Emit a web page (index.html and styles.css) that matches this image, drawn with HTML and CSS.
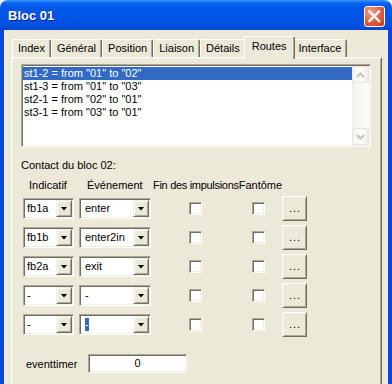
FILE: index.html
```html
<!DOCTYPE html>
<html>
<head>
    <meta charset="UTF-8">
    <title>Bloc 01</title>
    <link rel="stylesheet" href="styles.css">
</head>
<body>
    <div class="window">
        <div class="titlebar">
            <span class="title">Bloc 01</span>
            <span class="close">
                <svg width="19" height="19" viewBox="0 0 19 19"><path d="M4.5 4.5L14 14M14 4.5L4.5 14" stroke="#fff" stroke-width="2.4" stroke-linecap="square"/></svg>
            </span>
        </div>
        <div class="client">
            <ul class="tabs">
                <li class="tab">Index</li>
                <li class="tab">Général</li>
                <li class="tab">Position</li>
                <li class="tab">Liaison</li>
                <li class="tab">Détails</li>
                <li class="tab active">Routes</li>
                <li class="tab">Interface</li>
            </ul>
            <div class="page">
                <div class="listbox">
                    <ul class="items">
                        <li class="item selected">st1-2 = from "01" to "02"</li>
                        <li class="item">st1-3 = from "01" to "03"</li>
                        <li class="item">st2-1 = from "02" to "01"</li>
                        <li class="item">st3-1 = from "03" to "01"</li>
                    </ul>
                    <div class="vscroll">
                        <span class="sb-btn"><svg width="9" height="6" viewBox="0 0 9 6"><path d="M1 5L4.5 1.5L8 5" fill="none" stroke="#c6c4b8" stroke-width="2"/></svg></span>
                        <span class="sb-btn"><svg width="9" height="6" viewBox="0 0 9 6"><path d="M1 1L4.5 4.5L8 1" fill="none" stroke="#c6c4b8" stroke-width="2"/></svg></span>
                    </div>
                </div>

                <p class="caption">Contact du bloc 02:</p>
                <div class="heads">
                    <span class="h-ind">Indicatif</span>
                    <span class="h-evt">Événement</span>
                    <span class="h-fin">Fin des impulsions</span>
                    <span>Fantôme</span>
                </div>

                <div class="rows">
                    <div class="combo short"><span class="value">fb1a</span><span class="drop"></span></div>
                    <div class="combo long"><span class="value">enter</span><span class="drop"></span></div>
                    <span class="check"></span>
                    <span class="check"></span>
                    <button class="more">...</button>

                    <div class="combo short"><span class="value">fb1b</span><span class="drop"></span></div>
                    <div class="combo long"><span class="value">enter2in</span><span class="drop"></span></div>
                    <span class="check"></span>
                    <span class="check"></span>
                    <button class="more">...</button>

                    <div class="combo short"><span class="value">fb2a</span><span class="drop"></span></div>
                    <div class="combo long"><span class="value">exit</span><span class="drop"></span></div>
                    <span class="check"></span>
                    <span class="check"></span>
                    <button class="more">...</button>

                    <div class="combo short"><span class="value">-</span><span class="drop"></span></div>
                    <div class="combo long"><span class="value">-</span><span class="drop"></span></div>
                    <span class="check"></span>
                    <span class="check"></span>
                    <button class="more">...</button>

                    <div class="combo short"><span class="value">-</span><span class="drop"></span></div>
                    <div class="combo long"><span class="value"><span class="sel">-</span></span><span class="drop"></span></div>
                    <span class="check"></span>
                    <span class="check"></span>
                    <button class="more">...</button>
                </div>

                <div class="timer">
                    <span class="timer-label">eventtimer</span>
                    <span class="field">0</span>
                </div>
            </div>
        </div>
    </div>
</body>
</html>
```

FILE: styles.css
```css
html, body, ul, li, p{margin: 0;padding: 0;}
body{background: #eef0f2;font: 11px "Liberation Sans", Arial, sans-serif;color: #000;}

.window{width: 392px;height: 384px;overflow: hidden;display: flex;flex-direction: column;}

/* title bar */
.titlebar{height: 30px;flex: none;display: flex;justify-content: space-between;align-items: flex-start;padding: 0 7px 0 8px;border-radius: 8px 8px 0 0;
    background: linear-gradient(#3d95ff 0, #0a66f2 3px, #0058e8 7px, #0055e5 55%, #0052e0 85%, #0845c9 100%);}
.title{margin-top: 8px;font-size: 13px;font-weight: bold;color: #fff;text-shadow: 1px 1px #0a1c8a;}
.close{margin-top: 6px;width: 21px;height: 21px;box-sizing: border-box;border: 1px solid #fff;border-radius: 3px;display: flex;align-items: center;justify-content: center;
    background: radial-gradient(circle at 30% 25%, #f2a08a, #e35a3b 55%, #c73a1c);}

/* window body */
.client{flex: 1;background: #ece9d8;border-left: 4px solid #0846dc;border-right: 4px solid #0846dc;}

.tabs{display: flex;align-items: flex-end;height: 21px;margin: 6px 0 0 8px;list-style: none;}
.tab{height: 18px;box-sizing: border-box;padding: 0 5px;line-height: 17px;white-space: nowrap;
    border: 1px solid;border-bottom: 0;border-color: #fff #716f64 transparent #fff;border-radius: 2px 2px 0 0;box-shadow: inset -1px 0 #aca899;}
.tab.active{height: 23px;margin: 0 -2px -2px;padding: 0 7px 3px;line-height: 19px;position: relative;z-index: 1;background: #ece9d8;}

.page{margin-left: 7px;width: 371px;height: 330px;box-sizing: border-box;padding: 6px 9px 0;
    border: 1px solid;border-color: #fff #716f64 #716f64 #fff;box-shadow: inset 1px 1px #f1efe2, inset -1px -1px #aca899;}

/* list box */
.listbox{display: flex;width: 350px;height: 83px;box-sizing: border-box;padding: 1px;background: #fff;
    border: 1px solid;border-color: #aca899 #fff #fff #aca899;box-shadow: inset 1px 1px #716f64, inset -1px -1px #f1efe2;}
.items{flex: 1;padding-top: 1px;list-style: none;}
.item{height: 13px;line-height: 13px;padding-left: 1px;white-space: nowrap;}
.item.selected{background: #316ac5;color: #fff;}
.vscroll{width: 17px;display: flex;flex-direction: column;justify-content: space-between;background: linear-gradient(to right, #f3f1ea, #fdfdfa);}
.sb-btn{height: 17px;box-sizing: border-box;border: 1px solid #e9e8e0;border-radius: 2px;display: flex;align-items: center;justify-content: center;
    background: linear-gradient(to right, #f6f5f0, #fbfbf8 60%, #eeede6);}

.caption{margin-top: 12px;line-height: 13px;}
.heads{display: flex;margin-top: 7px;padding-left: 8px;line-height: 13px;white-space: nowrap;}
.h-ind{width: 58px;}
.h-evt{width: 66px;}
.h-fin{letter-spacing: -0.3px;}

/* contact rows */
.rows{display: grid;grid-template-columns: 56px 110px 63px 30px 25px;grid-auto-rows: 25px;row-gap: 4px;align-items: center;margin: 4px 0 0 2px;}
.combo{display: flex;height: 21px;box-sizing: border-box;padding: 1px;background: #fff;
    border: 1px solid;border-color: #aca899 #fff #fff #aca899;box-shadow: inset 1px 1px #716f64, inset -1px -1px #f1efe2;}
.combo.short{width: 51px;}
.combo.long{width: 72px;}
.value{flex: 1;line-height: 17px;padding-left: 2px;white-space: nowrap;}
.combo.long .value{padding-left: 4px;}
.sel{display: inline-block;line-height: 13px;background: #316ac5;color: #fff;}
.drop{width: 16px;box-sizing: border-box;display: flex;align-items: center;justify-content: center;background: #ece9d8;
    border: 1px solid;border-color: #f1efe2 #716f64 #716f64 #f1efe2;box-shadow: inset 1px 1px #fff, inset -1px -1px #aca899;}
.drop::after{content: "";width: 7px;height: 4px;background: #000;clip-path: polygon(0 0, 100% 0, 50% 100%);}

.check{width: 13px;height: 13px;box-sizing: border-box;background: #fff;
    border: 1px solid;border-color: #aca899 #fff #fff #aca899;box-shadow: inset 1px 1px #716f64, inset -1px -1px #f1efe2;}
.more{width: 25px;height: 25px;box-sizing: border-box;padding: 0 0 2px 1px;font: inherit;letter-spacing: 1px;color: #000;background: #ece9d8;
    border: 1px solid;border-color: #fff #716f64 #716f64 #fff;box-shadow: inset 1px 1px #f1efe2, inset -1px -1px #aca899;}

/* timer */
.timer{display: flex;align-items: center;margin: 17px 0 0 5px;}
.timer-label{width: 62px;}
.field{width: 99px;height: 19px;box-sizing: border-box;padding: 1px;line-height: 15px;text-align: center;background: #fff;
    border: 1px solid;border-color: #aca899 #fff #fff #aca899;box-shadow: inset 1px 1px #716f64, inset -1px -1px #f1efe2;}
```
